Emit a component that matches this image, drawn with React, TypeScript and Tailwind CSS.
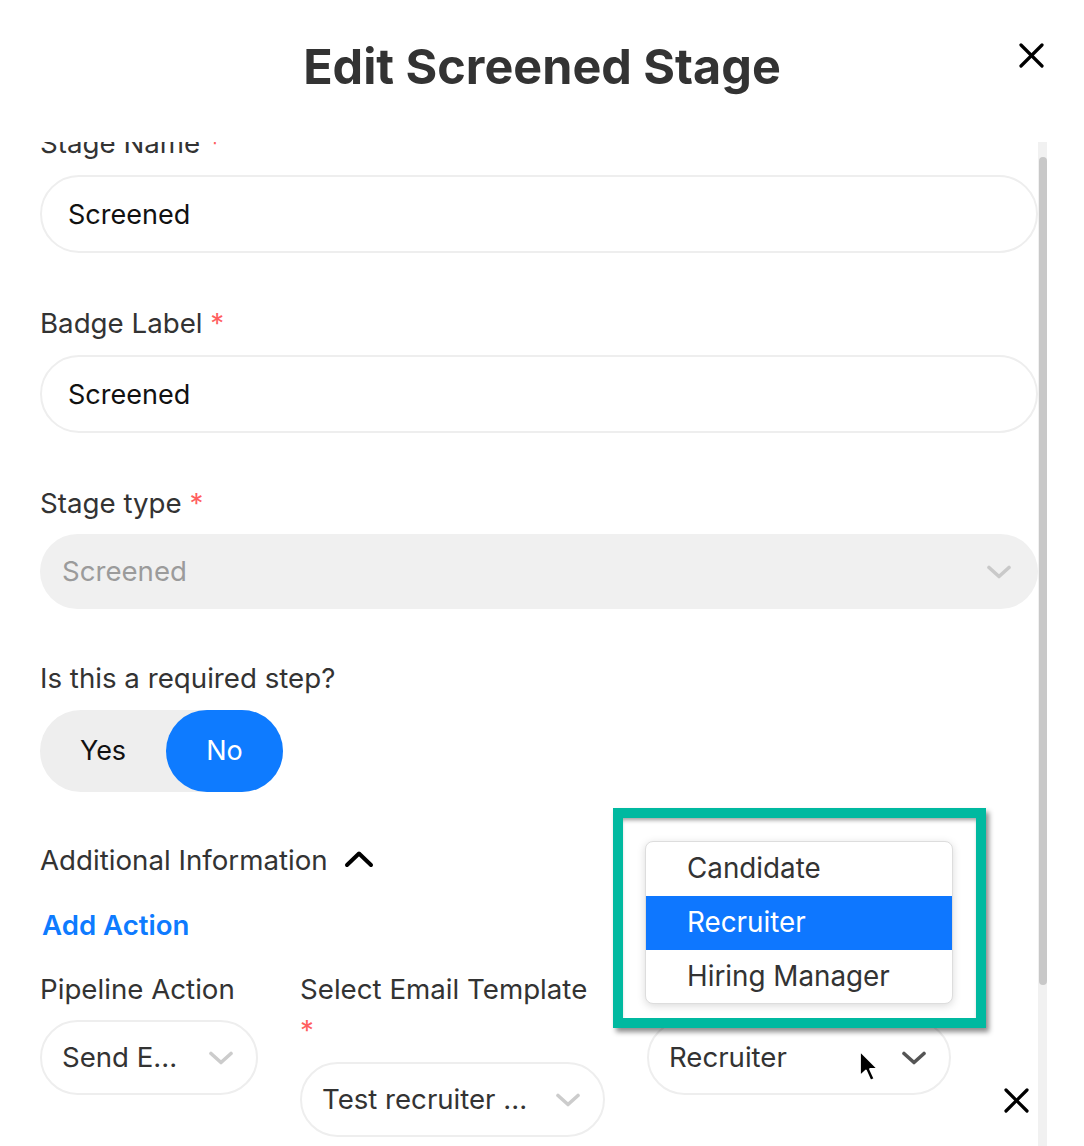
import React from "react";

function ChevronDown({ color, className }: { color: string; className?: string }) {
  return (
    <svg className={className} width="26" height="14" viewBox="0 0 26 14" fill="none">
      <polyline points="3,2.5 13,11.5 23,2.5" stroke={color} strokeWidth="3.6" strokeLinecap="round" strokeLinejoin="round" />
    </svg>
  );
}

function CloseX({ className }: { className?: string }) {
  return (
    <svg className={className} width="25" height="25" viewBox="0 0 25 25" fill="none">
      <line x1="2" y1="2" x2="23" y2="23" stroke="#000" strokeWidth="3.2" strokeLinecap="round" />
      <line x1="23" y1="2" x2="2" y2="23" stroke="#000" strokeWidth="3.2" strokeLinecap="round" />
    </svg>
  );
}

function Label({ text, required = true }: { text: string; required?: boolean }) {
  return (
    <div className="text-[27.7px] leading-[41px] text-[#333] whitespace-nowrap">
      {text}
      {required && <span className="text-[#ff5f5f]"> *</span>}
    </div>
  );
}

function TextInput({ value }: { value: string }) {
  return (
    <div className="mt-[11px] h-[78px] rounded-full border-2 border-[#eeeeee] bg-white flex items-center pl-[26px] pt-[2px] text-[27px] text-[#111]">
      {value}
    </div>
  );
}

function SmallSelect({
  value,
  chevColor,
  width,
  className,
}: {
  value: string;
  chevColor: string;
  width: string;
  className?: string;
}) {
  return (
    <div
      className={`${width} ${className ?? ""} h-[75px] rounded-full border-2 border-[#eeeeee] bg-white flex items-center justify-between pl-[20px] pr-[22px] text-[27.6px] text-[#333]`}
    >
      <span className="whitespace-nowrap">{value}</span>
      <ChevronDown color={chevColor} />
    </div>
  );
}

export default function App() {
  return (
    <div className="relative w-[1084px] h-[1146px] bg-white overflow-hidden flex flex-col font-['Inter',sans-serif]">
      {/* Header */}
      <div className="relative h-[142px] shrink-0 flex justify-center">
        <h1 className="pt-[38px] text-[48.5px] leading-[58px] font-bold text-[#333]">
          Edit Screened Stage
        </h1>
        <CloseX className="absolute right-[40px] top-[43px]" />
      </div>

      {/* Body */}
      <div className="flex-1 min-h-0 flex">
        <div className="flex-1 min-w-0 overflow-hidden pl-[40px]">
          <div className="-mt-[19px] flex flex-col">
            <Label text="Stage Name" />
            <TextInput value="Screened" />

            <div className="mt-[50px]">
              <Label text="Badge Label" />
              <TextInput value="Screened" />
            </div>

            <div className="mt-[50px]">
              <Label text="Stage type" />
              <div className="mt-[10px] h-[75px] rounded-full bg-[#f0f0f0] flex items-center justify-between pl-[22px] pr-[26px] text-[27.6px] text-[#9b9b9b]">
                <span>Screened</span>
                <ChevronDown color="#c9c9c9" />
              </div>
            </div>

            <div className="mt-[49px]">
              <Label text="Is this a required step?" required={false} />
              <div className="mt-[11px] w-[243px] h-[82px] rounded-full bg-[#eeeeee] flex">
                <div className="w-[126px] flex items-center justify-center text-[27px] text-[#111]">Yes</div>
                <div className="w-[117px] rounded-full bg-[#0e7bff] flex items-center justify-center text-[27px] text-white">
                  No
                </div>
              </div>
            </div>

            <div className="mt-[48px] flex items-center gap-[16px] text-[27.7px] leading-[41px] text-[#333]">
              <span>Additional Information</span>
              <svg width="30" height="18" viewBox="0 0 30 18" fill="none" className="mt-[-4px]">
                <polyline points="3,15 15,3.5 27,15" stroke="#000" strokeWidth="4" strokeLinecap="round" strokeLinejoin="round" />
              </svg>
            </div>

            <div className="mt-[24px] pl-[2px] text-[27.6px] leading-[41px] font-semibold text-[#0e7bff]">Add Action</div>

            <div className="mt-[23px] flex items-start">
              <div className="w-[218px] shrink-0">
                <Label text="Pipeline Action" required={false} />
                <SmallSelect value="Send E..." chevColor="#cccccc" width="w-[218px]" className="mt-[10px]" />
              </div>
              <div className="ml-[42px] w-[305px] shrink-0">
                <div className="text-[27.7px] leading-[41px] text-[#333] whitespace-nowrap">Select Email Template</div>
                <div className="text-[27.7px] leading-[41px] text-[#ff5f5f]">*</div>
                <SmallSelect value="Test recruiter ..." chevColor="#cccccc" width="w-[305px]" className="mt-[11px]" />
              </div>
              <div className="ml-[42px] w-[304px] shrink-0">
                <div className="h-[41px]" />
                <SmallSelect value="Recruiter" chevColor="#555555" width="w-[304px]" className="mt-[10px]" />
              </div>
              <CloseX className="ml-[53px] mt-[119px] shrink-0" />
            </div>
          </div>
        </div>

        {/* Scrollbar */}
        <div className="w-[9px] shrink-0 bg-[#f1f1f1] flex flex-col items-center">
          <div className="mt-[15px] w-[8px] h-[828px] rounded-full bg-[#c8c8c8]" />
        </div>
        <div className="w-[37px] shrink-0" />
      </div>

      {/* Annotation frame */}
      <div className="absolute left-[613px] top-[808px] w-[373px] h-[220px] border-[10px] border-[#00b9a0] shadow-[3px_4px_5px_rgba(0,0,0,0.45),inset_0_4px_4px_-2px_rgba(0,0,0,0.4)]" />

      {/* Dropdown menu */}
      <div className="absolute left-[645px] top-[841px] w-[308px] h-[163px] bg-white border border-[#dddddd] rounded-[8px] shadow-[0_2px_8px_rgba(0,0,0,0.15)] overflow-hidden flex flex-col text-[27.8px]">
        <div className="h-[55px] flex items-center pl-[41px] text-[#333]">Candidate</div>
        <div className="h-[54px] flex items-center pl-[41px] bg-[#0e77ff] text-white">Recruiter</div>
        <div className="h-[54px] flex items-center pl-[41px] text-[#333]">Hiring Manager</div>
      </div>

      {/* Mouse cursor */}
      <svg className="absolute left-[858px] top-[1049px]" width="26" height="36" viewBox="0 0 26 36" fill="none">
        <path
          d="M2 2 L2 27 L8 21.5 L12.5 31.5 L16.5 29.8 L12 20 L20 20 Z"
          fill="#000"
          stroke="#fff"
          strokeWidth="1.8"
          strokeLinejoin="round"
        />
      </svg>
    </div>
  );
}
